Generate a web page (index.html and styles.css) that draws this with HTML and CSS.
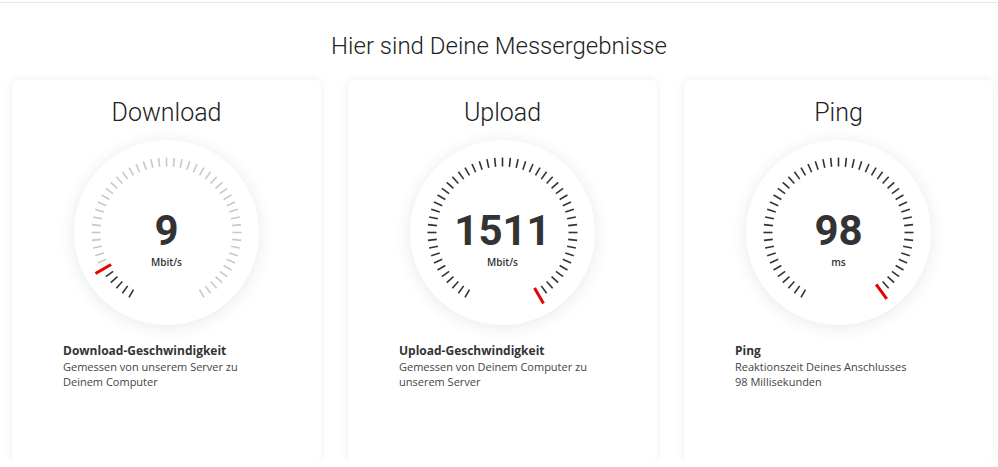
FILE: index.html
```html
<!DOCTYPE html>
<html lang="de">
<head>
  <meta charset="UTF-8" />
  <title>Speedtest Ergebnis</title>
  <link rel="stylesheet" href="styles.css">
</head>
<body>

<div class="topbar"></div>

<h1 class="page-title">Hier sind Deine Messergebnisse</h1>

<div class="results">
  <div class="card">
    <h2>Download</h2>
    <div class="gauge">
      <svg class="ticks" data-value="-120" data-fill="gray" width="185" height="185"></svg>
      <div class="value">9</div>
      <div class="unit">Mbit/s</div>
    </div>
    <div class="info">
      <strong>Download-Geschwindigkeit</strong>
      <p>Gemessen von unserem Server zu<br>Deinem Computer</p>
    </div>
  </div>

  <div class="card">
    <h2>Upload</h2>
    <div class="gauge">
      <svg class="ticks" data-value="150" data-fill="gray" width="185" height="185"></svg>
      <div class="value">1511</div>
      <div class="unit">Mbit/s</div>
    </div>
    <div class="info">
      <strong>Upload-Geschwindigkeit</strong>
      <p>Gemessen von Deinem Computer zu<br>unserem Server</p>
    </div>
  </div>

  <div class="card">
    <h2>Ping</h2>
    <div class="gauge">
      <svg class="ticks" data-value="144" data-fill="none" width="185" height="185"></svg>
      <div class="value">98</div>
      <div class="unit">ms</div>
    </div>
    <div class="info">
      <strong>Ping</strong>
      <p>Reaktionszeit Deines Anschlusses<br>98 Millisekunden</p>
    </div>
  </div>
</div>

<script>
  // Skala zeichnen: 51 Striche von -150° bis +150°
  const NS = 'http://www.w3.org/2000/svg';
  const c = 92.5;

  function line(svg, a, r1, r2, cls) {
    const rad = a * Math.PI / 180;
    const l = document.createElementNS(NS, 'line');
    l.setAttribute('x1', (c + Math.sin(rad) * r1).toFixed(2));
    l.setAttribute('y1', (c - Math.cos(rad) * r1).toFixed(2));
    l.setAttribute('x2', (c + Math.sin(rad) * r2).toFixed(2));
    l.setAttribute('y2', (c - Math.cos(rad) * r2).toFixed(2));
    l.setAttribute('class', cls);
    svg.appendChild(l);
  }

  document.querySelectorAll('svg.ticks').forEach(svg => {
    const value = Number(svg.dataset.value);
    const rest = svg.dataset.fill;
    for (let a = -150; a <= 150; a += 6) {
      if (a === value) continue;
      if (a < value) line(svg, a, 66, 75, 'tick on');
      else if (rest === 'gray') line(svg, a, 66, 75, 'tick off');
    }
    line(svg, value, 64, 82, 'tick needle');
  });
</script>

</body>
</html>
```

FILE: styles.css
```css
html, body {
  margin: 0; padding: 0;
  background: #fff;
  color: #333;
  font-family: "Open Sans", Arial, sans-serif;
}

.topbar {
  height: 2px;
  border-bottom: 1px solid #e8e8e8;
}

.page-title {
  margin: 0;
  padding-top: 28px;
  height: 49px;
  text-align: center;
  font-family: Roboto, Arial, sans-serif;
  font-weight: 300;
  font-size: 24px;
  line-height: 30px;
  color: #222;
}

.results {
  display: grid;
  grid-template-columns: repeat(3, 309px);
  gap: 27px;
  padding-left: 12px;
}

.card {
  height: 382px;
  background: #fff;
  border-radius: 6px;
  box-shadow: 0 0 8px rgba(0,0,0,0.08);
  display: flex;
  flex-direction: column;
  align-items: center;
}

.card h2 {
  margin: 18px 0 0;
  font-family: Roboto, Arial, sans-serif;
  font-weight: 300;
  font-size: 25px;
  line-height: 30px;
  color: #222;
}

.gauge {
  position: relative;
  width: 185px; height: 185px;
  margin-top: 12px;
  border-radius: 50%;
  background: #fff;
  box-shadow: 0 2px 18px rgba(0,0,0,0.09);
  display: flex;
  flex-direction: column;
  align-items: center;
  justify-content: center;
}

.gauge .ticks {
  position: absolute;
  top: 0; left: 0;
}

.tick { stroke-width: 1.6; }
.tick.on { stroke: #333; }
.tick.off { stroke: #c8c8c8; }
.tick.needle { stroke: #e60000; stroke-width: 3; }

.value {
  position: relative;
  font-family: Roboto, Arial, sans-serif;
  font-weight: 700;
  font-size: 42px;
  line-height: 42px;
  margin-top: 14px;
  color: #333;
}

.unit {
  position: relative;
  font-size: 10px;
  font-weight: 600;
  line-height: 14px;
  margin-top: 3px;
  color: #333;
}

.info {
  align-self: stretch;
  padding: 18px 0 0 51px;
}

.info strong {
  display: block;
  font-size: 12px;
  line-height: 16px;
  font-weight: 700;
}

.info p {
  margin: 0;
  font-size: 11px;
  line-height: 15px;
  color: #444;
}
```
